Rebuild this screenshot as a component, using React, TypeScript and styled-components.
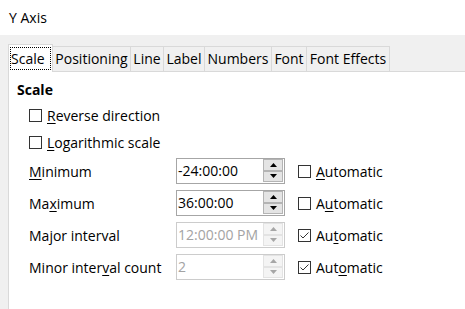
import React from 'react';
import styled, { createGlobalStyle } from 'styled-components';

const Global = createGlobalStyle`
  html, body { margin: 0; padding: 0; background: #fff; }
  body {
    font-family: "Open Sans", "Noto Sans", "DejaVu Sans", sans-serif;
    font-size: 14px;
    color: #000;
  }
`;

const Dialog = styled.div`
  display: flex;
  flex-direction: column;
  width: 465px;
  height: 309px;
  overflow: hidden;
`;

const TitleBar = styled.div`
  box-sizing: border-box;
  height: 35px;
  padding: 8px 0 0 9px;
  line-height: 19px;
  background: #fff;
  color: #000;
`;

const Body = styled.div`
  flex: 1;
  display: flex;
  flex-direction: column;
  background: #f0f0f0;
  padding: 9px 0 0 8px;
`;

const TabBar = styled.div`
  display: flex;
  align-items: flex-end;
  height: 27px;
`;

const Tab = styled.div<{ $w: number; $active?: boolean }>`
  box-sizing: border-box;
  position: relative;
  z-index: ${(p) => (p.$active ? 2 : 1)};
  width: ${(p) => p.$w}px;
  height: ${(p) => (p.$active ? 28 : 25)}px;
  margin-left: -1px;
  margin-bottom: ${(p) => (p.$active ? -1 : 0)}px;
  &:first-child { margin-left: 0; }
  border: 1px solid #d9d9d9;
  border-bottom: none;
  background: ${(p) => (p.$active ? '#fff' : '#f0f0f0')};
  padding-top: 2px;
  line-height: 19px;
  text-align: center;
  white-space: nowrap;
  color: #000;
`;

const FocusRing = styled.span`
  display: block;
  margin: 0 1px;
  padding: 1px 0;
  border: 1px dotted #000;
  text-align: left;
  padding-left: 0;
`;

const Panel = styled.div`
  flex: 1;
  background: #fff;
  border-left: 1px solid #d9d9d9;
  border-top: 1px solid #d9d9d9;
  padding: 8px 0 0 8px;
`;

const Heading = styled.div`
  font-weight: 700;
  line-height: 19px;
  margin-bottom: 3px;
  color: #000;
`;

const CheckRow = styled.div<{ $h: number }>`
  display: flex;
  align-items: center;
  height: ${(p) => p.$h}px;
  padding-left: 12px;
`;

const BoxFrame = styled.span`
  box-sizing: border-box;
  display: inline-flex;
  align-items: center;
  justify-content: center;
  width: 13px;
  height: 13px;
  border: 1px solid #333;
  background: #fff;
  flex: none;
`;

const CheckText = styled.span`
  margin-left: 5px;
  line-height: 19px;
  white-space: nowrap;
`;

const Mn = styled.u`
  text-decoration: underline;
  text-decoration-thickness: 1px;
  text-underline-offset: 2px;
`;

const FieldGrid = styled.div`
  display: grid;
  grid-template-columns: 147px 109px 1fr;
  grid-auto-rows: 32px;
  align-items: center;
  padding-left: 12px;
`;

const Label = styled.span`
  line-height: 19px;
  white-space: nowrap;
  color: #000;
`;

const SpinBox = styled.div<{ $disabled?: boolean }>`
  box-sizing: border-box;
  display: flex;
  width: 109px;
  height: 26px;
  border: 1px solid ${(p) => (p.$disabled ? '#cccccc' : '#a6a6a6')};
  background: #fff;
`;

const SpinValue = styled.div<{ $disabled?: boolean }>`
  flex: 1;
  padding-left: 1px;
  line-height: 24px;
  white-space: nowrap;
  overflow: hidden;
  color: ${(p) => (p.$disabled ? '#a3a3a3' : '#000')};
`;

const SpinButtons = styled.div`
  display: flex;
  flex-direction: column;
  width: 20px;
  margin-right: 1px;
  padding-bottom: 1px;
`;

const SpinButton = styled.div<{ $disabled?: boolean }>`
  box-sizing: border-box;
  display: flex;
  align-items: center;
  justify-content: center;
  height: 12px;
  border: 1px solid ${(p) => (p.$disabled ? '#e3e3e3' : '#b4b4b4')};
  background: ${(p) => (p.$disabled ? '#f4f4f4' : '#e4e4e4')};
`;

const AutoCell = styled.div`
  display: flex;
  align-items: center;
  padding-left: 13px;
`;

const CheckBox = ({ checked }: { checked?: boolean }) => (
  <BoxFrame>
    {checked && (
      <svg width="11" height="11" viewBox="0 0 11 11">
        <polyline points="1.5,5.5 4,8 9.5,2.5" fill="none" stroke="#333" strokeWidth="1" />
      </svg>
    )}
  </BoxFrame>
);

const Arrow = ({ up, disabled }: { up?: boolean; disabled?: boolean }) => (
  <svg width="7" height="4" viewBox="0 0 7 4">
    <polygon
      points={up ? '0,4 3.5,0 7,4' : '0,0 7,0 3.5,4'}
      fill={disabled ? '#a6a6a6' : '#000'}
    />
  </svg>
);

const Spin = ({ value, disabled }: { value: string; disabled?: boolean }) => (
  <SpinBox $disabled={disabled}>
    <SpinValue $disabled={disabled}>{value}</SpinValue>
    <SpinButtons>
      <SpinButton $disabled={disabled}>
        <Arrow up disabled={disabled} />
      </SpinButton>
      <SpinButton $disabled={disabled}>
        <Arrow disabled={disabled} />
      </SpinButton>
    </SpinButtons>
  </SpinBox>
);

const Mnemonic = ({ text, at }: { text: string; at: number }) => (
  <>
    {text.slice(0, at)}
    <Mn>{text[at]}</Mn>
    {text.slice(at + 1)}
  </>
);

const tabs: { label: string; w: number }[] = [
  { label: 'Scale', w: 45 },
  { label: 'Positioning', w: 79 },
  { label: 'Line', w: 34 },
  { label: 'Label', w: 42 },
  { label: 'Numbers', w: 68 },
  { label: 'Font', w: 36 },
  { label: 'Font Effects', w: 84 },
];

const rows = [
  { label: 'Minimum', m: 0, value: '-24:00:00', disabled: false, auto: false, am: 0 },
  { label: 'Maximum', m: 2, value: '36:00:00', disabled: false, auto: false, am: 1 },
  { label: 'Major interval', m: 2, value: '12:00:00 PM', disabled: true, auto: true, am: 2 },
  { label: 'Minor interval count', m: 11, value: '2', disabled: true, auto: true, am: 3 },
];

export default function App() {
  return (
    <>
      <Global />
      <Dialog>
        <TitleBar>Y Axis</TitleBar>
        <Body>
          <TabBar>
            {tabs.map((t, i) => (
              <Tab key={t.label} $w={t.w} $active={i === 0}>
                {i === 0 ? <FocusRing>{t.label}</FocusRing> : t.label}
              </Tab>
            ))}
          </TabBar>
          <Panel>
            <Heading>Scale</Heading>
            <CheckRow $h={27}>
              <CheckBox />
              <CheckText>
                <Mnemonic text="Reverse direction" at={0} />
              </CheckText>
            </CheckRow>
            <CheckRow $h={26}>
              <CheckBox />
              <CheckText>
                <Mnemonic text="Logarithmic scale" at={0} />
              </CheckText>
            </CheckRow>
            <FieldGrid>
              {rows.map((r) => (
                <React.Fragment key={r.label}>
                  <Label>
                    <Mnemonic text={r.label} at={r.m} />
                  </Label>
                  <Spin value={r.value} disabled={r.disabled} />
                  <AutoCell>
                    <CheckBox checked={r.auto} />
                    <CheckText>
                      <Mnemonic text="Automatic" at={r.am} />
                    </CheckText>
                  </AutoCell>
                </React.Fragment>
              ))}
            </FieldGrid>
          </Panel>
        </Body>
      </Dialog>
    </>
  );
}
